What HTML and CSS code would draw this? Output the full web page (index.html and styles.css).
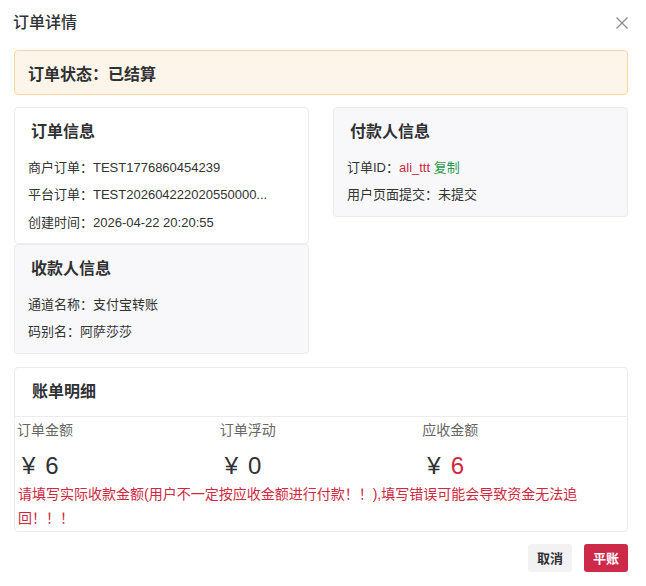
FILE: index.html
```html
<!DOCTYPE html>
<html lang="zh-CN">
<head>
<meta charset="utf-8">
<title>订单详情</title>
<link rel="stylesheet" href="styles.css">
</head>
<body>
<div class="dialog">
  <div class="dlg-header">
    <div class="dlg-title">订单详情</div>
    <button class="close" aria-label="close">
      <svg width="14" height="14" viewBox="0 0 14 14"><path d="M1.5 1.5 L12.5 12.5 M12.5 1.5 L1.5 12.5" stroke="#8a8c91" stroke-width="1.3" fill="none"/></svg>
    </button>
  </div>

  <div class="alert">订单状态：已结算</div>

  <div class="grid">
    <div class="col">
      <div class="card card-white">
        <div class="card-title">订单信息</div>
        <div class="row">商户订单：TEST1776860454239</div>
        <div class="row">平台订单：TEST202604222020550000...</div>
        <div class="row">创建时间：2026-04-22 20:20:55</div>
      </div>
      <div class="card card-gray">
        <div class="card-title">收款人信息</div>
        <div class="row">通道名称：支付宝转账</div>
        <div class="row">码别名：阿萨莎莎</div>
      </div>
    </div>
    <div class="col">
      <div class="card card-gray">
        <div class="card-title">付款人信息</div>
        <div class="row">订单ID：<span class="red">ali_ttt</span> <span class="green">复制</span></div>
        <div class="row">用户页面提交：未提交</div>
      </div>
    </div>
  </div>

  <div class="bill">
    <div class="bill-header">账单明细</div>
    <div class="bill-body">
      <div class="bill-cols">
        <div class="bill-col">
          <div class="bill-label">订单金额</div>
          <div class="bill-value"><span class="yen">¥</span>6</div>
        </div>
        <div class="bill-col">
          <div class="bill-label">订单浮动</div>
          <div class="bill-value"><span class="yen">¥</span>0</div>
        </div>
        <div class="bill-col">
          <div class="bill-label">应收金额</div>
          <div class="bill-value"><span class="yen">¥</span><span class="red">6</span></div>
        </div>
      </div>
      <div class="warn">请填写实际收款金额(用户不一定按应收金额进行付款！！),填写错误可能会导致资金无法追回！！！</div>
    </div>
  </div>

  <div class="footer">
    <button class="btn btn-cancel">取消</button>
    <button class="btn btn-ok">平账</button>
  </div>
</div>
</body>
</html>
```

FILE: styles.css
```css
* { box-sizing: border-box; }
html, body { margin: 0; padding: 0; background: #fff; }
body {
  font-family: "Liberation Sans", "Noto Sans CJK SC", sans-serif;
  color: #303133;
}
.dialog {
  width: 646px;
  padding: 11px 18px 0 14px;
}
.dlg-header {
  display: flex;
  align-items: center;
  justify-content: space-between;
  height: 24px;
  margin-left: -1px;
}
.dlg-title {
  font-size: 16px;
  line-height: 24px;
  font-weight: 500;
  color: #303133;
}
.close {
  border: 0;
  background: none;
  padding: 0;
  margin-right: -1px;
  width: 14px;
  height: 14px;
  display: flex;
}
.alert {
  margin-top: 15px;
  height: 45px;
  border: 1px solid #f8d9a3;
  background: #fdf5ea;
  border-radius: 4px;
  padding: 0 13px;
  display: flex;
  align-items: center;
  font-size: 16px;
  font-weight: 600;
  color: #303133;
}
.grid {
  margin-top: 12px;
  display: grid;
  grid-template-columns: 295px 295px;
  column-gap: 24px;
  align-items: start;
}
.col { display: flex; flex-direction: column; }
.card {
  display: flex;
  flex-direction: column;
  gap: 7.5px;
  border: 1px solid #ebebf3;
  border-radius: 4px;
  padding: 12px 13px 10.5px 13px;
}
.card-white { background: #fff; }
.card-gray { background: #f8f8fb; }
.card-title {
  font-size: 16px;
  line-height: 24px;
  font-weight: 600;
  padding-left: 3px;
  margin-bottom: 6px;
  color: #303133;
}
.row {
  font-size: 13px;
  line-height: 20px;
  color: #333;
  white-space: nowrap;
}
.red { color: #d0283f; }
.green { color: #1f9a4c; }
.bill {
  margin-top: 13px;
  border: 1px solid #ebebf0;
  border-radius: 4px;
  background: #fff;
}
.bill-header {
  height: 49px;
  border-bottom: 1px solid #ebebf0;
  padding: 12px 17px;
  font-size: 16px;
  line-height: 24px;
  font-weight: 600;
  color: #303133;
}
.bill-body { padding: 3px 2px 1px 2px; }
.bill-cols { display: flex; }
.bill-col { flex: 1; }
.bill-label {
  font-size: 14px;
  line-height: 20px;
  color: #666;
}
.bill-value {
  margin-top: 10px;
  font-size: 24px;
  line-height: 32px;
  padding-left: 5px;
  color: #303133;
}
.yen { margin-right: 10px; }
.warn {
  width: 565px;
  padding-left: 1px;
  font-size: 14px;
  line-height: 24px;
  color: #d0283f;
}
.footer {
  margin-top: 12px;
  display: flex;
  justify-content: flex-end;
  gap: 12px;
}
.btn {
  height: 28px;
  width: 44px;
  border: 0;
  border-radius: 3px;
  font-family: "Liberation Sans", "Noto Sans CJK SC", sans-serif;
  font-size: 13px;
  font-weight: 600;
  padding: 0;
}
.btn-cancel { background: #f2f2f3; color: #303133; }
.btn-ok { background: #cd2949; color: #fff; }
```
